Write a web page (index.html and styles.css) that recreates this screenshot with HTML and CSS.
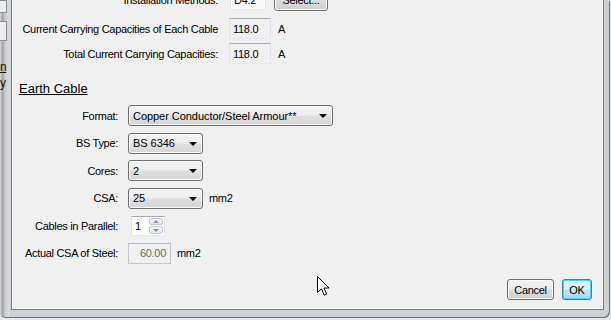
FILE: index.html
```html
<!DOCTYPE html>
<html lang="en">
<head>
  <meta charset="UTF-8">
  <title>Earth Cable</title>
  <link rel="stylesheet" href="styles.css">
</head>
<body>

<div class="window">
  <div class="edge">
    <div class="peek-box"></div>
    <div class="peek-box tall"></div>
    <div class="peek-text under">n</div>
    <div class="peek-text">y</div>
  </div>

  <div class="client">
    <div class="cable">
      <div class="row first">
        <label class="lbl">Installation Methods:</label>
        <span class="textbox short">D4.2</span>
        <button class="btn select-btn">Select...</button>
      </div>
      <div class="row">
        <label class="lbl">Current Carrying Capacities of Each Cable</label>
        <span class="textbox">118.0</span>
        <span class="unit">A</span>
      </div>
      <div class="row">
        <label class="lbl">Total Current Carrying Capacities:</label>
        <span class="textbox">118.0</span>
        <span class="unit">A</span>
      </div>
    </div>

    <div class="earth">
      <h2>Earth Cable</h2>
      <div class="earth-rows">
        <div class="row">
          <label class="lbl">Format:</label>
          <div class="combo wide"><span>Copper Conductor/Steel Armour**</span><i class="arrow"></i></div>
        </div>
        <div class="row">
          <label class="lbl">BS Type:</label>
          <div class="combo"><span>BS 6346</span><i class="arrow"></i></div>
        </div>
        <div class="row">
          <label class="lbl">Cores:</label>
          <div class="combo"><span>2</span><i class="arrow"></i></div>
        </div>
        <div class="row">
          <label class="lbl">CSA:</label>
          <div class="combo"><span>25</span><i class="arrow"></i></div>
          <span class="unit">mm2</span>
        </div>
        <div class="row">
          <label class="lbl">Cables in Parallel:</label>
          <div class="spinner">
            <span class="spin-value">1</span>
            <div class="spin-btns">
              <span class="spin up"></span>
              <span class="spin down"></span>
            </div>
          </div>
        </div>
        <div class="row">
          <label class="lbl">Actual CSA of Steel:</label>
          <span class="textbox disabled">60.00</span>
          <span class="unit">mm2</span>
        </div>
      </div>
    </div>

    <div class="actions">
      <button class="btn">Cancel</button>
      <button class="btn default">OK</button>
    </div>
  </div>
</div>

<svg class="cursor" width="14" height="21" viewBox="0 0 14 21">
  <path d="M0.5,0.5 L0.5,16.5 L4.5,12.8 L7.2,19.2 L9.6,18.2 L7,12 L12,12 Z" fill="#fff" stroke="#000" stroke-width="1" stroke-linejoin="miter"/>
</svg>

</body>
</html>
```

FILE: styles.css
```css
html, body { margin: 0; padding: 0; }
body { width: 611px; height: 320px; overflow: hidden; position: relative; background: #e4e6e9; font-family: "Liberation Sans", Arial, sans-serif; font-size: 11px; letter-spacing: -0.3px; color: #000; }

.window { display: flex; width: 609px; height: 317px; background: #cdd1d6; border-bottom-right-radius: 6px; border-bottom-left-radius: 6px; box-shadow: 1px 1px 0 #6e7175, 0 1px 0 #6e7175; overflow: hidden; }
.edge { width: 11px; flex: none; background: linear-gradient(to right, #d6d7d9, #9fa2a6 25%, #c9cbce 45%, #dadcdf 80%, #c4c7cb); overflow: hidden; }
.peek-box { width: 6px; height: 11px; border: 1px solid #8b8f94; border-left: none; background: #eceef0; }
.peek-box.tall { height: 18px; margin-top: 8px; }
.peek-text { font-size: 12px; line-height: 12px; color: #111; }
.peek-text.under { margin-top: 20px; text-decoration: underline; }
.peek-text + .peek-text { margin-top: 4px; }

.client { flex: 1; display: flex; flex-direction: column; margin: 0 5px 7px 0; background: #f0f0f0; border: 1px solid #7f848a; border-top: none; box-shadow: inset 1px -1px 0 #fdfdfd, inset -1px 0 0 #fdfdfd; }

.row { display: flex; align-items: center; height: 21px; white-space: nowrap; }
.lbl { text-align: right; flex: none; }

.cable { margin-top: -11px; padding-left: 8px; }
.cable .row { margin-bottom: 4px; }
.cable .row.first { margin-bottom: 8px; }
.cable .lbl { width: 198px; margin-right: 11px; }

.textbox { display: inline-flex; align-items: center; box-sizing: border-box; width: 42px; height: 21px; padding-left: 3px; background: #f0f0f0; border: 1px solid #e2e3ea; border-top-color: #abadb3; border-bottom-color: #e3e9ef; }
.textbox.short { width: 36px; margin-left: 1px; background: #fafafa; }
.textbox.disabled { justify-content: flex-end; width: 43px; padding: 0 4px 0 0; color: #6d6d6d; border-color: #c4c6ca; border-top-color: #b6b8bb; }
.unit { margin-left: 7px; }

.btn { box-sizing: border-box; height: 21px; padding: 0; font: inherit; letter-spacing: inherit; color: #000; border: 1px solid #707070; border-radius: 3px; background: linear-gradient(#f2f2f2 0%, #ebebeb 48%, #dddddd 52%, #cfcfcf 100%); box-shadow: inset 0 0 0 1px #fbfbfb; }
.select-btn { width: 54px; height: 23px; margin-left: 8px; }

.earth { padding-left: 8px; margin-top: 13px; }
.earth h2 { margin: 0 0 0 -1px; font-size: 13px; font-weight: normal; letter-spacing: 0; line-height: 15px; text-decoration: underline; }
.earth-rows { display: flex; flex-direction: column; gap: 6.6px; margin-top: 9px; }
.earth .lbl { width: 98px; margin-right: 10px; }
.earth .unit { margin-left: 6px; }

.combo { display: flex; align-items: center; justify-content: space-between; box-sizing: border-box; width: 75px; height: 21px; padding: 0 5px 0 4px; letter-spacing: -0.05px; border: 1px solid #707070; border-radius: 3px; background: linear-gradient(#f4f4f4 0%, #ededed 48%, #e0e0e0 52%, #d6d6d6 100%); box-shadow: inset 0 0 0 1px #fafafa; }
.combo.wide { width: 205px; }
.arrow { width: 0; height: 0; border-left: 4px solid transparent; border-right: 4px solid transparent; border-top: 4px solid #000; margin-top: 1px; }

.spinner { display: flex; box-sizing: border-box; width: 34px; height: 20px; margin-left: 3px; background: #fff; border: 1px solid #e2e3ea; border-top-color: #abadb3; border-bottom-color: #e3e9ef; }
.spin-value { flex: 1; padding-left: 3px; line-height: 18px; }
.spin-btns { display: flex; flex-direction: column; width: 14px; padding: 1px 1px 1px 0; gap: 1px; }
.spin { flex: 1; display: flex; align-items: center; justify-content: center; border: 1px solid #c3cad3; border-radius: 2px; background: linear-gradient(#f5f7f9, #e3e7ec); }
.spin::after { content: ""; width: 0; height: 0; border-left: 3px solid transparent; border-right: 3px solid transparent; }
.spin.up::after { border-bottom: 3px solid #8797a9; }
.spin.down::after { border-top: 3px solid #8797a9; }

.actions { display: flex; justify-content: flex-end; gap: 8px; margin-top: auto; padding: 0 11px 9px 0; }
.actions .btn { width: 47px; }
.actions .btn.default { width: 30px; border-color: #3c7fb1; background: linear-gradient(#eaf6fd 0%, #d9f0fc 48%, #bee6fd 52%, #a7d9f5 100%); box-shadow: inset 0 0 0 1px #48d1fa; }

.cursor { position: absolute; left: 317px; top: 276px; }
```
